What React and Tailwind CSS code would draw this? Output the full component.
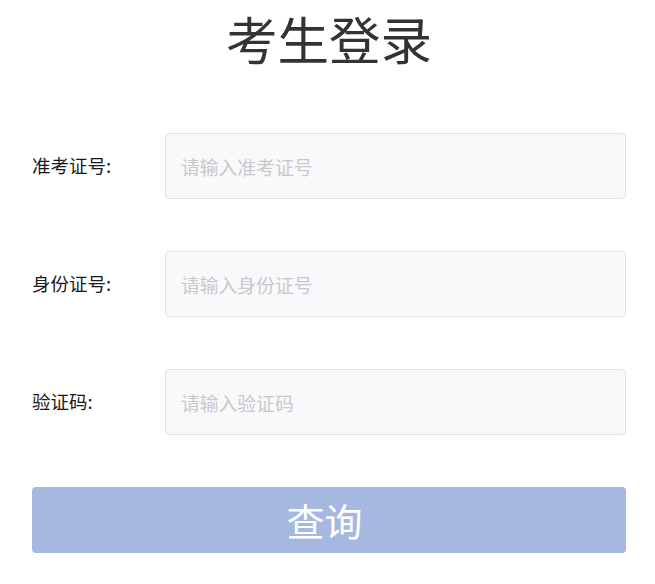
import React, { useState } from 'react';

const fields = [
  { key: 'ticket', label: '准考证号:', placeholder: '请输入准考证号' },
  { key: 'idcard', label: '身份证号:', placeholder: '请输入身份证号' },
  { key: 'code', label: '验证码:', placeholder: '请输入验证码' },
];

const App = () => {
  const [form, setForm] = useState({ ticket: '', idcard: '', code: '' });

  return (
    <div
      className="min-h-screen bg-white"
      style={{ fontFamily: '"Noto Sans CJK SC", "Noto Sans", sans-serif' }}
    >
      <div className="w-[594px] ml-[32px]">
        <h1 className="text-center text-[51.5px] leading-[76px] text-[#333333] font-normal">考生登录</h1>

        <div className="mt-[57px] flex flex-col gap-[52px]">
          {fields.map((f) => (
            <div key={f.key} className="flex items-center">
              <label className="w-[133px] shrink-0 text-[18.5px] text-[#1a1a1a]">{f.label}</label>
              <input
                type="text"
                value={form[f.key]}
                onChange={(e) => setForm((prev) => ({ ...prev, [f.key]: e.target.value }))}
                placeholder={f.placeholder}
                className="flex-1 h-[66px] px-[15px] bg-[#f9f9fb] border border-[#e3e3e6] rounded-[4px] text-[18.8px] outline-none placeholder:text-[#c8c8cc]"
              />
            </div>
          ))}
        </div>

        <button className="mt-[52px] w-full h-[66px] pr-[9px] rounded-[4px] bg-[#a5b9e0] text-white text-[38px] leading-none">
          查询
        </button>
      </div>
    </div>
  );
};

export default App;
